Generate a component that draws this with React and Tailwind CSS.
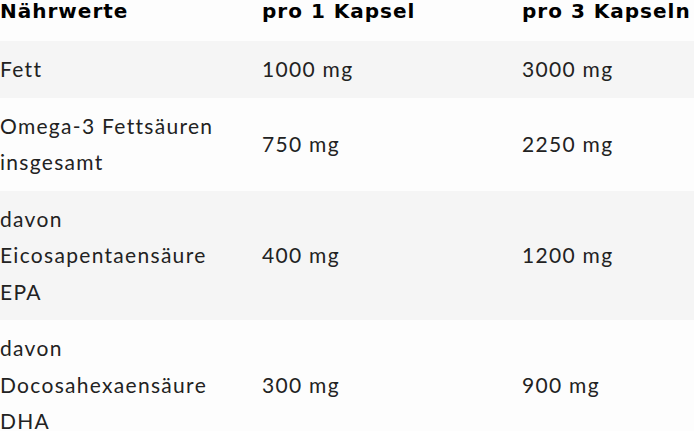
import React from "react";

const rows = [
  { name: ["Fett"], a: "1000 mg", b: "3000 mg", gray: true },
  { name: ["Omega-3 Fettsäuren", "insgesamt"], a: "750 mg", b: "2250 mg", gray: false },
  { name: ["davon", "Eicosapentaensäure", "EPA"], a: "400 mg", b: "1200 mg", gray: true },
  { name: ["davon", "Docosahexaensäure", "DHA"], a: "300 mg", b: "900 mg", gray: false },
];

export default function App() {
  return (
    <div className="w-[694px] h-[431px] overflow-hidden bg-[#fdfdfd] text-[#222]" style={{ fontFamily: "Lato, 'Noto Sans', sans-serif" }}>
      <div
        className="grid grid-cols-[262px_260px_1fr] h-[41px] items-start font-bold text-[20px] leading-[22px] text-black tracking-[1px]"
        style={{ fontFamily: "'DejaVu Sans', sans-serif" }}
      >
        <div>Nährwerte</div>
        <div>pro 1 Kapsel</div>
        <div>pro 3 Kapseln</div>
      </div>
      {rows.map((r, i) => (
        <div
          key={i}
          className={`grid grid-cols-[262px_260px_1fr] items-center py-[10px] text-[21px] leading-[36.5px] font-normal tracking-[1.3px] ${r.gray ? "bg-[#f5f5f5]" : "bg-[#fdfdfd]"}`}
        >
          <div className="flex flex-col">
            {r.name.map((n, j) => (
              <span key={j}>{n}</span>
            ))}
          </div>
          <div>{r.a}</div>
          <div>{r.b}</div>
        </div>
      ))}
    </div>
  );
}
